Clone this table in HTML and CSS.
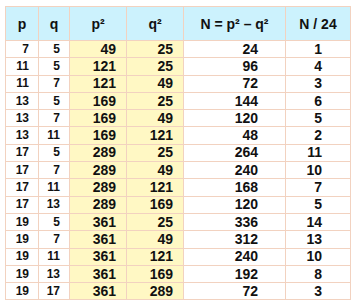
FILE: index.html
```html
<!DOCTYPE html>
<html>
<head>
<meta charset="utf-8">
<link rel="stylesheet" href="styles.css">
</head>
<body>
<table class="tbl">
<colgroup>
<col class="c-p"><col class="c-q"><col class="c-p2"><col class="c-q2"><col class="c-n"><col class="c-d">
</colgroup>
<thead>
<tr><th>p</th><th>q</th><th>p²</th><th>q²</th><th>N = p² – q²</th><th>N / 24</th></tr>
</thead>
<tbody>
<tr><td class="s">7</td><td class="s">5</td><td class="y">49</td><td class="y">25</td><td class="n">24</td><td class="d">1</td></tr>
<tr><td class="s">11</td><td class="s">5</td><td class="y">121</td><td class="y">25</td><td class="n">96</td><td class="d">4</td></tr>
<tr><td class="s">11</td><td class="s">7</td><td class="y">121</td><td class="y">49</td><td class="n">72</td><td class="d">3</td></tr>
<tr><td class="s">13</td><td class="s">5</td><td class="y">169</td><td class="y">25</td><td class="n">144</td><td class="d">6</td></tr>
<tr><td class="s">13</td><td class="s">7</td><td class="y">169</td><td class="y">49</td><td class="n">120</td><td class="d">5</td></tr>
<tr><td class="s">13</td><td class="s">11</td><td class="y">169</td><td class="y">121</td><td class="n">48</td><td class="d">2</td></tr>
<tr><td class="s">17</td><td class="s">5</td><td class="y">289</td><td class="y">25</td><td class="n">264</td><td class="d">11</td></tr>
<tr><td class="s">17</td><td class="s">7</td><td class="y">289</td><td class="y">49</td><td class="n">240</td><td class="d">10</td></tr>
<tr><td class="s">17</td><td class="s">11</td><td class="y">289</td><td class="y">121</td><td class="n">168</td><td class="d">7</td></tr>
<tr><td class="s">17</td><td class="s">13</td><td class="y">289</td><td class="y">169</td><td class="n">120</td><td class="d">5</td></tr>
<tr><td class="s">19</td><td class="s">5</td><td class="y">361</td><td class="y">25</td><td class="n">336</td><td class="d">14</td></tr>
<tr><td class="s">19</td><td class="s">7</td><td class="y">361</td><td class="y">49</td><td class="n">312</td><td class="d">13</td></tr>
<tr><td class="s">19</td><td class="s">11</td><td class="y">361</td><td class="y">121</td><td class="n">240</td><td class="d">10</td></tr>
<tr><td class="s">19</td><td class="s">13</td><td class="y">361</td><td class="y">169</td><td class="n">192</td><td class="d">8</td></tr>
<tr><td class="s">19</td><td class="s">17</td><td class="y">361</td><td class="y">289</td><td class="n">72</td><td class="d">3</td></tr>
</tbody>
</table>
</body>
</html>
```
FILE: styles.css
```css
html, body {
  margin: 0;
  padding: 0;
  background: #ffffff;
}
body {
  padding: 6px 0 0 5px;
}
.tbl {
  border-collapse: collapse;
  table-layout: fixed;
  width: 345px;
  font-family: "Liberation Sans", Arial, sans-serif;
  font-weight: bold;
  color: #111;
}
.c-p { width: 33px; }
.c-q { width: 31px; }
.c-p2 { width: 57px; }
.c-q2 { width: 57px; }
.c-n { width: 102px; }
.c-d { width: 65px; }
.tbl th, .tbl td {
  border: 1px solid #f2d2c0;
  padding: 0;
  white-space: nowrap;
}
.tbl th {
  background: #ccf2fd;
  height: 33px;
  font-size: 14px;
  text-align: center;
}
.tbl td {
  height: 16.3px;
  font-size: 14px;
  line-height: 15px;
  text-align: right;
  padding-right: 9px;
  background: #ffffff;
}
.tbl td.s {
  font-size: 12px;
}
.tbl td.y {
  background: #fff8c4;
  padding-right: 10px;
}
.tbl td.n {
  padding-right: 27px;
}
.tbl td.d {
  padding-right: 28px;
}
```
